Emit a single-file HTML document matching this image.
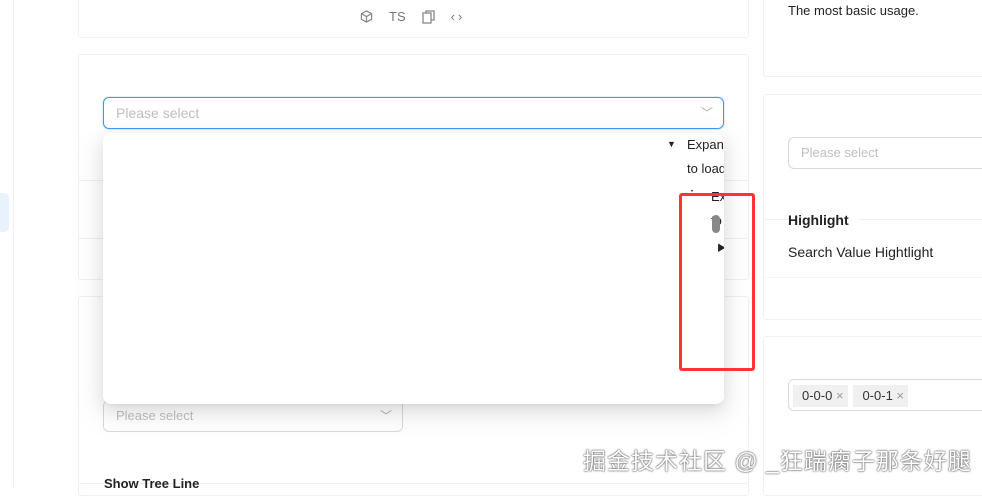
<!DOCTYPE html>
<html><head><meta charset="utf-8"><style>
*{box-sizing:border-box;margin:0;padding:0}
body{width:982px;height:487px;overflow:hidden;background:#fff;font-family:"Liberation Sans","Noto Sans CJK SC",sans-serif;position:relative;color:#222}
.a{position:absolute;white-space:nowrap}
.card{position:absolute;border:1px solid #eef0f2;border-radius:3px;background:#fff}
.sel{position:absolute;border:1px solid #d9d9d9;border-radius:6px;color:#bfbfbf;font-size:14px;padding-left:12px;line-height:30px;height:32px;white-space:nowrap}
</style></head><body>
<div class="a" style="left:13px;top:0;width:1px;height:487px;background:#f0f0f0"></div>
<div class="a" style="left:0;top:193px;width:9px;height:39px;background:#e8f2fd;border-radius:0 5px 5px 0"></div>

<div class="card" style="left:78px;top:-5px;width:671px;height:43px"></div>
<div class="a" style="left:360px;top:9px;font-size:13px;color:#777;display:flex;gap:16px;align-items:center">
<svg width="13" height="13" viewBox="0 0 14 14" fill="none" stroke="#888" stroke-width="1.3"><path d="M7 1L12.5 4V10L7 13L1.5 10V4Z M1.5 4L7 7L12.5 4 M7 7V13"/></svg>
<span>TS</span>
<svg width="13" height="14" viewBox="0 0 13 14" fill="none" stroke="#888" stroke-width="1.3"><rect x="1" y="3" width="8" height="10"/><path d="M4 3V1H12V10H9"/></svg>
<span style="letter-spacing:3px">‹›</span></div>

<div class="card" style="left:78px;top:54px;width:671px;height:226px"></div>
<div class="a" style="left:78px;top:180px;width:671px;height:1px;background:#eef0f2"></div>
<div class="a" style="left:78px;top:238px;width:671px;height:1px;background:#eef0f2"></div>
<div class="card" style="left:78px;top:296px;width:671px;height:200px"></div>
<div class="a" style="left:78px;top:483px;width:671px;height:1px;background:#eef0f2"></div>
<div class="a" style="left:104px;top:476px;font-size:13px;font-weight:bold;color:#222">Show Tree Line</div>

<div class="sel" style="left:103px;top:97px;width:621px;border-color:#4096ff;box-shadow:0 0 0 1px rgba(64,150,255,.15)">Please select<span class="a" style="right:10px;top:0;color:#aaa;font-size:12px">﹀</span></div>
<div class="sel" style="left:103px;top:400px;width:300px;font-size:13px">Please select<span class="a" style="right:10px;top:0;color:#aaa;font-size:12px">﹀</span></div>

<div class="a" style="left:103px;top:133px;width:621px;height:271px;background:#fff;border-radius:8px;box-shadow:0 6px 16px rgba(0,0,0,.1),0 3px 6px -4px rgba(0,0,0,.12),0 9px 28px 8px rgba(0,0,0,.05);overflow:hidden;font-size:13px;color:#222">
<div class="a" style="left:564px;top:6px;font-size:9px">▼</div>
<div class="a" style="left:584px;top:4px">Expand</div>
<div class="a" style="left:584px;top:28px">to load</div>
<div class="a" style="left:588px;top:56px;font-size:6px">•</div>
<div class="a" style="left:608px;top:56px">Expand</div>
<div class="a" style="left:608px;top:80px">to load</div>
<div class="a" style="left:609px;top:82px;width:8px;height:18px;background:#888;border-radius:4px"></div>
<div class="a" style="left:614px;top:108px;font-size:9px">▶</div>
</div>

<div class="a" style="left:679px;top:193px;width:76px;height:178px;border:3px solid #f33;border-radius:3px"></div>

<div class="card" style="left:763px;top:-5px;width:230px;height:82px"></div>
<div class="a" style="left:788px;top:3px;font-size:13px">The most basic usage.</div>
<div class="card" style="left:763px;top:94px;width:230px;height:226px"></div>
<div class="sel" style="left:788px;top:137px;width:210px;font-size:13px">Please select</div>
<div class="a" style="left:763px;top:219px;width:220px;height:1px;background:#eef0f2"></div>
<div class="a" style="left:788px;top:212px;font-size:14px;font-weight:bold;background:#fff;padding-right:10px">Highlight</div>
<div class="a" style="left:788px;top:244px;font-size:14px">Search Value Hightlight</div>
<div class="a" style="left:763px;top:277px;width:220px;height:1px;background:#f4f5f6"></div>
<div class="card" style="left:763px;top:336px;width:230px;height:160px"></div>
<div class="sel" style="left:788px;top:379px;width:210px;padding-left:4px">
<span style="display:inline-block;background:#f0f0f0;color:#333;font-size:13px;line-height:22px;padding:0 4px 0 9px;margin-top:3px">0-0-0 <span style="color:#999">×</span></span>
<span style="display:inline-block;background:#f0f0f0;color:#333;font-size:13px;line-height:22px;padding:0 4px 0 9px;margin-left:2px">0-0-1 <span style="color:#999">×</span></span></div>

<div class="a" style="left:583px;top:442px;font-size:23px;color:#fff;text-shadow:0 0 2px #555,0 0 1px #333;letter-spacing:1px">掘金技术社区 @ _狂踹瘸子那条好腿</div>
</body></html>
